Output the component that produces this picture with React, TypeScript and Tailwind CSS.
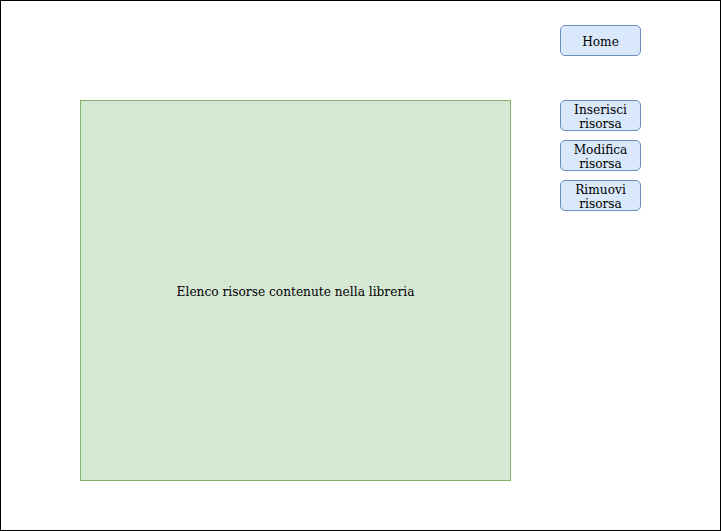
function Btn({ children, className = "" }: { children: React.ReactNode; className?: string }) {
  return (
    <div
      className={`flex h-[31px] w-[81px] items-center justify-center rounded-[5px] border border-[#6c8ebf] bg-[#dae8fc] pt-[2px] text-center text-[12.2px] leading-[14px] text-black ${className}`}
    >
      {children}
    </div>
  );
}

export default function App() {
  return (
    <div
      className="flex h-[531px] w-[721px] items-start border border-black bg-white"
      style={{ fontFamily: '"DejaVu Serif", serif' }}
    >
      <div className="ml-[79px] mt-[99px] flex h-[381px] w-[431px] items-center justify-center border border-[#82b366] bg-[#d5e8d4] pt-[2px] text-[12.2px] leading-[14px] text-black">
        Elenco risorse contenute nella libreria
      </div>
      <div className="ml-[49px] mt-[24px] flex flex-col">
        <Btn>Home</Btn>
        <Btn className="mt-[44px]">
          Inserisci
          <br />
          risorsa
        </Btn>
        <Btn className="mt-[9px]">
          Modifica
          <br />
          risorsa
        </Btn>
        <Btn className="mt-[9px]">
          Rimuovi
          <br />
          risorsa
        </Btn>
      </div>
    </div>
  );
}
